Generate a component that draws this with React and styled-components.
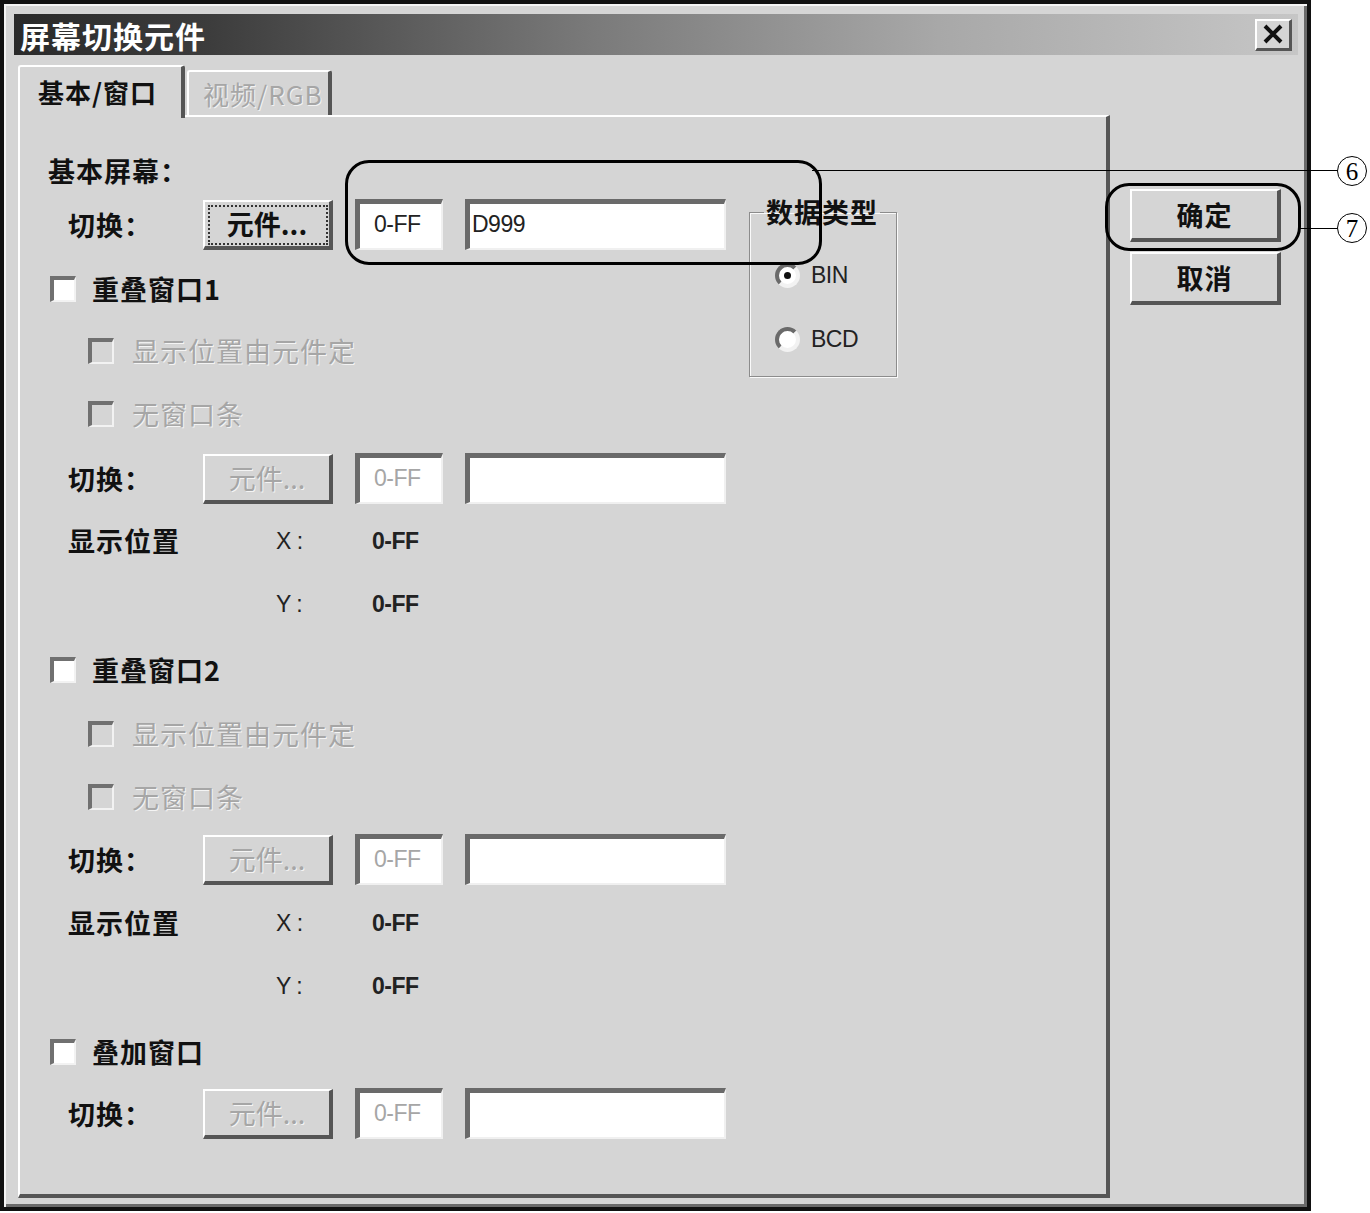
import React from 'react';
import styled, { createGlobalStyle } from 'styled-components';

const GlobalStyle = createGlobalStyle`
	html, body { margin: 0; padding: 0; background: #fff; }
	body { font-family: "Noto Sans CJK SC", "Liberation Sans", sans-serif; }
	* { box-sizing: border-box; }
`;

const FACE = '#d5d5d5';
const DIS = '#a6a6a6';

const Page = styled.div`
	position: relative;
	width: 1370px;
	height: 1213px;
`;

const Window = styled.div`
	width: 1311px;
	height: 1211px;
	background: ${FACE};
	border: 4px solid #111;
	box-shadow: inset 2px 2px 0 #f4f4f4, inset -3px -3px 0 #6a6a6a;
	padding: 10px 9px 0 10px;
`;

const TitleBar = styled.div`
	height: 41px;
	display: flex;
	align-items: center;
	justify-content: space-between;
	padding: 0 6px 0 6px;
	background: linear-gradient(to right, #2a2a2a 0%, #3c3c3c 15%, #7a7a7a 45%, #a8a8a8 72%, #c6c6c6 100%);
`;

const Title = styled.span`
	color: #fff;
	font-size: 30px;
	font-weight: 700;
	line-height: 1;
	letter-spacing: 1px;
`;

const CloseButton = styled.div`
	width: 37px;
	height: 32px;
	display: flex;
	align-items: center;
	justify-content: center;
	background: ${FACE};
	border-top: 2px solid #fff;
	border-left: 2px solid #fff;
	border-right: 3px solid #555;
	border-bottom: 3px solid #555;
`;

const Body = styled.div`
	display: flex;
	margin-top: 10px;
	padding-left: 4px;
`;

const TabArea = styled.div`
	width: 1092px;
	display: flex;
	flex-direction: column;
`;

const TabStrip = styled.div`
	display: flex;
	align-items: flex-end;
	gap: 2px;
	height: 50px;
	position: relative;
	z-index: 1;
`;

const Tab = styled.div`
	width: ${({ $active }) => ($active ? '167px' : '145px')};
	height: ${({ $active }) => ($active ? '53px' : '45px')};
	margin-bottom: ${({ $active }) => ($active ? '-3px' : '0')};
	background: ${FACE};
	border-top: 2px solid #fff;
	border-left: 2px solid #fff;
	border-right: 4px solid #555;
	border-radius: 3px 3px 0 0;
	display: flex;
	align-items: ${({ $active }) => ($active ? 'flex-start' : 'center')};
	padding: ${({ $active }) => ($active ? '10px 0 0 18px' : '0 0 0 14px')};
	font-size: 26px;
	line-height: 30px;
	letter-spacing: 1px;
	font-weight: ${({ $active }) => ($active ? 700 : 400)};
	color: ${({ $active }) => ($active ? '#111' : DIS)};
	text-shadow: ${({ $active }) => ($active ? 'none' : '1px 1px 0 #f2f2f2')};
	white-space: nowrap;
`;

const Panel = styled.div`
	height: 1083px;
	border-top: 2px solid #fff;
	border-left: 2px solid #fff;
	border-right: 4px solid #555;
	border-bottom: 4px solid #555;
	padding: 30px 0 0 28px;
	display: flex;
	flex-direction: column;
`;

const ButtonColumn = styled.div`
	display: flex;
	flex-direction: column;
	gap: 10px;
	margin-left: 20px;
	padding-top: 124px;
`;

const DialogButton = styled.div`
	width: 151px;
	height: 53px;
	display: flex;
	align-items: center;
	justify-content: center;
	background: ${FACE};
	border-top: 2px solid #fff;
	border-left: 2px solid #fff;
	border-right: 4px solid #555;
	border-bottom: 4px solid #555;
	font-size: 27px;
	font-weight: 700;
	letter-spacing: 1px;
	color: #111;
`;

const TopSection = styled.div`
	display: flex;
	align-items: flex-start;
`;

const LeftCol = styled.div`
	width: 701px;
	display: flex;
	flex-direction: column;
`;

const Row = styled.div`
	display: flex;
	align-items: center;
	height: 48px;
	flex-shrink: 0;
	margin-top: ${({ $mt }) => $mt || 0}px;
`;

const Text = styled.span`
	font-size: 27px;
	line-height: 30px;
	letter-spacing: 1px;
	font-weight: ${({ $dim }) => ($dim ? 400 : 700)};
	color: ${({ $dim }) => ($dim ? DIS : '#111')};
	text-shadow: ${({ $dim }) => ($dim ? '1px 1px 0 #f4f4f4' : 'none')};
	white-space: nowrap;
`;

const Mono = styled.span`
	font-family: "Liberation Sans", "DejaVu Sans", sans-serif;
	font-size: 23px;
	font-weight: ${({ $bold }) => ($bold ? 700 : 400)};
	color: ${({ $dim }) => ($dim ? DIS : '#222')};
	letter-spacing: -0.5px;
	white-space: nowrap;
`;

const SwitchGrid = styled.div`
	display: grid;
	grid-template-columns: 113px 130px 88px 261px;
	column-gap: 22px;
	align-items: center;
	height: 48px;
	flex-shrink: 0;
	margin-top: ${({ $mt }) => $mt || 0}px;
	padding-left: 20px;
`;

const PosGrid = styled.div`
	display: grid;
	grid-template-columns: 208px 96px auto;
	align-items: center;
	height: 48px;
	flex-shrink: 0;
	margin-top: ${({ $mt }) => $mt || 0}px;
	padding-left: 20px;
`;

const PushButton = styled.div`
	height: 50px;
	display: flex;
	align-items: center;
	justify-content: center;
	background: ${FACE};
	border-top: 2px solid #fff;
	border-left: 2px solid #fff;
	border-right: 4px solid #555;
	border-bottom: 4px solid #555;
	outline: ${({ $focus }) => ($focus ? '2px dotted #333' : 'none')};
	outline-offset: -7px;
	font-size: 27px;
	color: ${({ $dim }) => ($dim ? DIS : '#111')};
	font-weight: ${({ $dim }) => ($dim ? 400 : 700)};
	text-shadow: ${({ $dim }) => ($dim ? '1px 1px 0 #f4f4f4' : 'none')};
`;

const Field = styled.div`
	height: 51px;
	display: flex;
	align-items: center;
	background: #fff;
	border-top: 5px solid #6a6a6a;
	border-left: 5px solid #6a6a6a;
	border-right: 2px solid #f0f0f0;
	border-bottom: 2px solid #f0f0f0;
	padding-left: ${({ $pad }) => $pad ?? 12}px;
	padding-bottom: 4px;
`;

const CheckRow = styled(Row)`
	gap: ${({ $gap }) => $gap || 17}px;
`;

const Box = styled.span`
	width: 26px;
	height: 26px;
	margin-left: ${({ $ml }) => $ml || 0}px;
	background: ${({ $dim }) => ($dim ? FACE : '#fff')};
	border-top: 4px solid #707070;
	border-left: 4px solid #707070;
	border-right: 2px solid #f2f2f2;
	border-bottom: 2px solid #f2f2f2;
`;

const GroupBox = styled.fieldset`
	width: 148px;
	height: 180px;
	margin: 50px 0 0 0;
	padding: 0 8px 0 14px;
	border: 1px solid #8c8c8c;
	box-shadow: 1px 1px 0 #fafafa, inset 1px 1px 0 #fafafa;
	min-inline-size: 0;
`;

const Legend = styled.legend`
	padding: 0 2px;
	font-size: 27px;
	line-height: 30px;
	letter-spacing: 1px;
	font-weight: 700;
	color: #111;
	white-space: nowrap;
`;

const RadioRow = styled.div`
	display: flex;
	align-items: center;
	gap: 11px;
	height: 48px;
	margin-top: ${({ $mt }) => $mt || 0}px;
	padding-left: 11px;
`;

const Radio = styled.span`
	width: 25px;
	height: 25px;
	border-radius: 50%;
	background: #fff;
	border: 4px solid;
	border-color: #6a6a6a #f2f2f2 #f2f2f2 #6a6a6a;
	display: flex;
	align-items: center;
	justify-content: center;
	&::after {
		content: '';
		width: 7px;
		height: 7px;
		border-radius: 50%;
		background: ${({ $checked }) => ($checked ? '#111' : 'transparent')};
	}
`;

const Ring = styled.div`
	position: absolute;
	left: ${({ $x }) => $x}px;
	top: ${({ $y }) => $y}px;
	width: ${({ $w }) => $w}px;
	height: ${({ $h }) => $h}px;
	border: 3px solid #000;
	border-radius: 24px;
	pointer-events: none;
`;

const Leader = styled.div`
	position: absolute;
	left: ${({ $x }) => $x}px;
	top: ${({ $y }) => $y}px;
	width: ${({ $w }) => $w}px;
	height: 0;
	border-top: 1.5px solid #000;
`;

const Callout = styled.div`
	position: absolute;
	left: ${({ $x }) => $x - 15}px;
	top: ${({ $y }) => $y - 15}px;
	width: 30px;
	height: 30px;
	border: 1.5px solid #000;
	border-radius: 50%;
	background: #fff;
	display: flex;
	align-items: center;
	justify-content: center;
	font-family: "Liberation Serif", "DejaVu Serif", serif;
	font-size: 25px;
	line-height: 1;
	color: #000;
`;

const CloseIcon = () => (
	<svg width="22" height="20" viewBox="0 0 22 20">
		<path d="M3 2 L19 18 M19 2 L3 18" stroke="#111" strokeWidth="4" />
	</svg>
);

const SwitchRow = ({ mt, active, value = '' }) => (
	<SwitchGrid $mt={mt}>
		<Text>切换：</Text>
		<PushButton $focus={active} $dim={!active}>元件...</PushButton>
		<Field $pad={14}>
			<Mono $dim={!active}>0-FF</Mono>
		</Field>
		<Field $pad={2}>
			<Mono>{value}</Mono>
		</Field>
	</SwitchGrid>
);

const PositionRows = ({ mt }) => (
	<>
		<PosGrid $mt={mt}>
			<Text>显示位置</Text>
			<Mono>X :</Mono>
			<Mono $bold>0-FF</Mono>
		</PosGrid>
		<PosGrid $mt={15}>
			<span />
			<Mono>Y :</Mono>
			<Mono $bold>0-FF</Mono>
		</PosGrid>
	</>
);

const Check = ({ mt, label, dim, sub }) => (
	<CheckRow $mt={mt} $gap={sub ? 18 : 16}>
		<Box $dim={dim} $ml={sub ? 40 : 2} />
		<Text $dim={dim}>{label}</Text>
	</CheckRow>
);

const App = () => (
	<Page>
		<GlobalStyle />
		<Window>
			<TitleBar>
				<Title>屏幕切换元件</Title>
				<CloseButton>
					<CloseIcon />
				</CloseButton>
			</TitleBar>
			<Body>
				<TabArea>
					<TabStrip>
						<Tab $active>基本/窗口</Tab>
						<Tab>视频/RGB</Tab>
					</TabStrip>
					<Panel>
						<TopSection>
							<LeftCol>
								<Row>
									<Text>基本屏幕：</Text>
								</Row>
								<SwitchRow mt={4} active value="D999" />
								<Check mt={18} label="重叠窗口1" />
								<Check mt={14} label="显示位置由元件定" dim sub />
							</LeftCol>
							<GroupBox>
								<Legend>数据类型</Legend>
								<RadioRow $mt={24}>
									<Radio $checked />
									<Mono>BIN</Mono>
								</RadioRow>
								<RadioRow $mt={16}>
									<Radio />
									<Mono>BCD</Mono>
								</RadioRow>
							</GroupBox>
						</TopSection>
						<Check mt={13} label="无窗口条" dim sub />
						<SwitchRow mt={15} />
						<PositionRows mt={16} />
						<Check mt={18} label="重叠窗口2" />
						<Check mt={16} label="显示位置由元件定" dim sub />
						<Check mt={15} label="无窗口条" dim sub />
						<SwitchRow mt={13} />
						<PositionRows mt={17} />
						<Check mt={18} label="叠加窗口" />
						<SwitchRow mt={12} />
					</Panel>
				</TabArea>
				<ButtonColumn>
					<DialogButton>确定</DialogButton>
					<DialogButton>取消</DialogButton>
				</ButtonColumn>
			</Body>
		</Window>

		{/* annotation marks drawn over the dialog */}
		<Ring $x={345} $y={160} $w={477} $h={105} />
		<Leader $x={812} $y={170} $w={526} />
		<Callout $x={1352} $y={171}>6</Callout>
		<Ring $x={1105} $y={183} $w={196} $h={68} />
		<Leader $x={1300} $y={228} $w={38} />
		<Callout $x={1352} $y={228}>7</Callout>
	</Page>
);

export default App;
